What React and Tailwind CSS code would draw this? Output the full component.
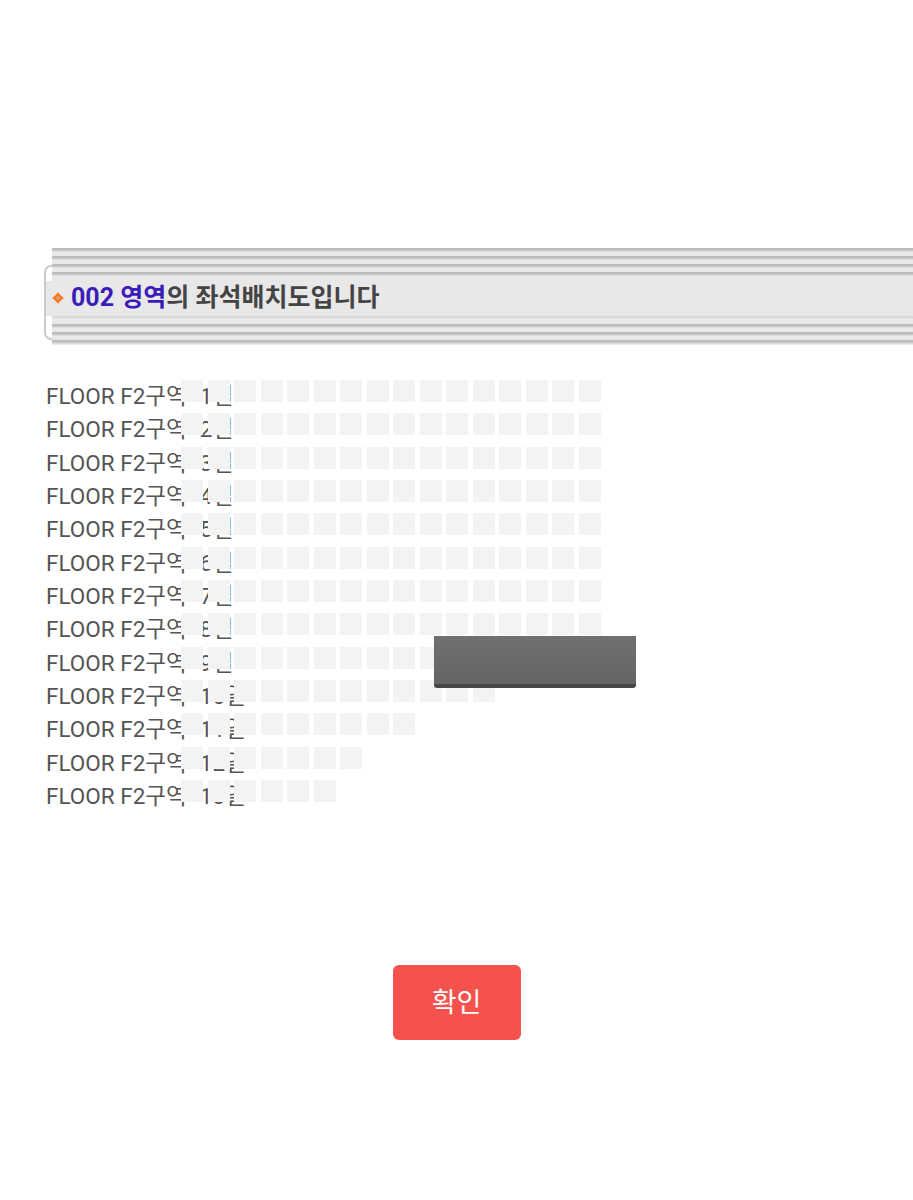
const rows = [
  { no: 1, seats: 16 },
  { no: 2, seats: 16 },
  { no: 3, seats: 16 },
  { no: 4, seats: 16 },
  { no: 5, seats: 16 },
  { no: 6, seats: 16 },
  { no: 7, seats: 16 },
  { no: 8, seats: 16 },
  { no: 9, seats: 16 },
  { no: 10, seats: 12 },
  { no: 11, seats: 9 },
  { no: 12, seats: 7 },
  { no: 13, seats: 6 },
];

const Diamond = () => (
  <svg width="12" height="12" viewBox="0 0 10 10" className="shrink-0">
    <path d="M5 0.2 L7.2 2.8 L9.8 5 L7.2 7.2 L5 9.8 L2.8 7.2 L0.2 5 L2.8 2.8Z" fill="#f07a2a" />
    <circle cx="5" cy="5" r="1.6" fill="#f59a55" />
  </svg>
);

const Stripe = () => (
  <div className="h-[8px] bg-[linear-gradient(#bcbcbc_0,#bcbcbc_2px,#d4d4d4_3px,#ececec_4px,#e6e6e6_8px)]" />
);

const Header = () => (
  <div className="mt-[248px] flex pl-[44px]">
    <div className="flex w-[8px] shrink-0 flex-col">
      <div className="h-[17px]" />
      <div className="h-[16px] rounded-tl-[7px] border-l-2 border-t-2 border-[#cbcbcb]" />
      <div className="h-[35px] border-l-2 border-[#cbcbcb] bg-[#e8e8e8]" />
      <div className="h-[24px] rounded-bl-[7px] border-b-2 border-l-2 border-[#cbcbcb]" />
    </div>
    <div className="flex min-w-0 flex-1 flex-col">
      <Stripe />
      <Stripe />
      <Stripe />
      <Stripe />
      <div className="flex h-[36px] items-center gap-[7px] bg-[#e8e8e8]">
        <Diamond />
        <p className="whitespace-nowrap text-[25px] font-bold text-[#444]">
          <span className="text-[#3a1db8]">002 영역</span>의 좌석배치도입니다
        </p>
      </div>
      <div className="h-[8px] bg-[linear-gradient(#d9d9d9_0,#d9d9d9_2px,#ececec_3px,#e6e6e6_8px)]" />
      <Stripe />
      <Stripe />
      <div className="h-[5px] bg-[linear-gradient(#bcbcbc_0,#bcbcbc_2px,#d4d4d4_3px,#f4f4f4_5px)]" />
    </div>
  </div>
);

const SeatRow = ({ no, seats }) => (
  <div className="relative h-[33.33px]">
    <p className="whitespace-nowrap pl-[1px] pt-[2px] text-[22.5px] leading-[33px] text-[#555]">
      <span>FLOOR F2구역</span>
      <span className="ml-[13px]">{no}열</span>
    </p>
    <div className="absolute left-[136px] top-[2px] flex gap-[4.5px]">
      {Array.from({ length: seats }).map((_, i) => (
        <div key={i} className="h-[22px] w-[22px] bg-[#f3f3f3]" />
      ))}
    </div>
  </div>
);

export default function App() {
  return (
    <div className="relative min-h-[1200px] overflow-hidden bg-white font-['Roboto','Noto_Sans_CJK_KR',sans-serif]">
      <Header />
      <div className="relative ml-[45px] mt-[33px]">
        {rows.map((r) => (
          <SeatRow key={r.no} {...r} />
        ))}
        <div className="absolute left-[389px] top-[258px] h-[52px] w-[202px] rounded-b-[3px] border-b-[4px] border-[#474747] bg-[linear-gradient(#707070,#656565)]" />
      </div>
      <div className="mt-[154px] flex justify-center">
        <button className="h-[75px] w-[128px] rounded-[6px] bg-[#f5524e] text-[27px] text-white">확인</button>
      </div>
    </div>
  );
}
